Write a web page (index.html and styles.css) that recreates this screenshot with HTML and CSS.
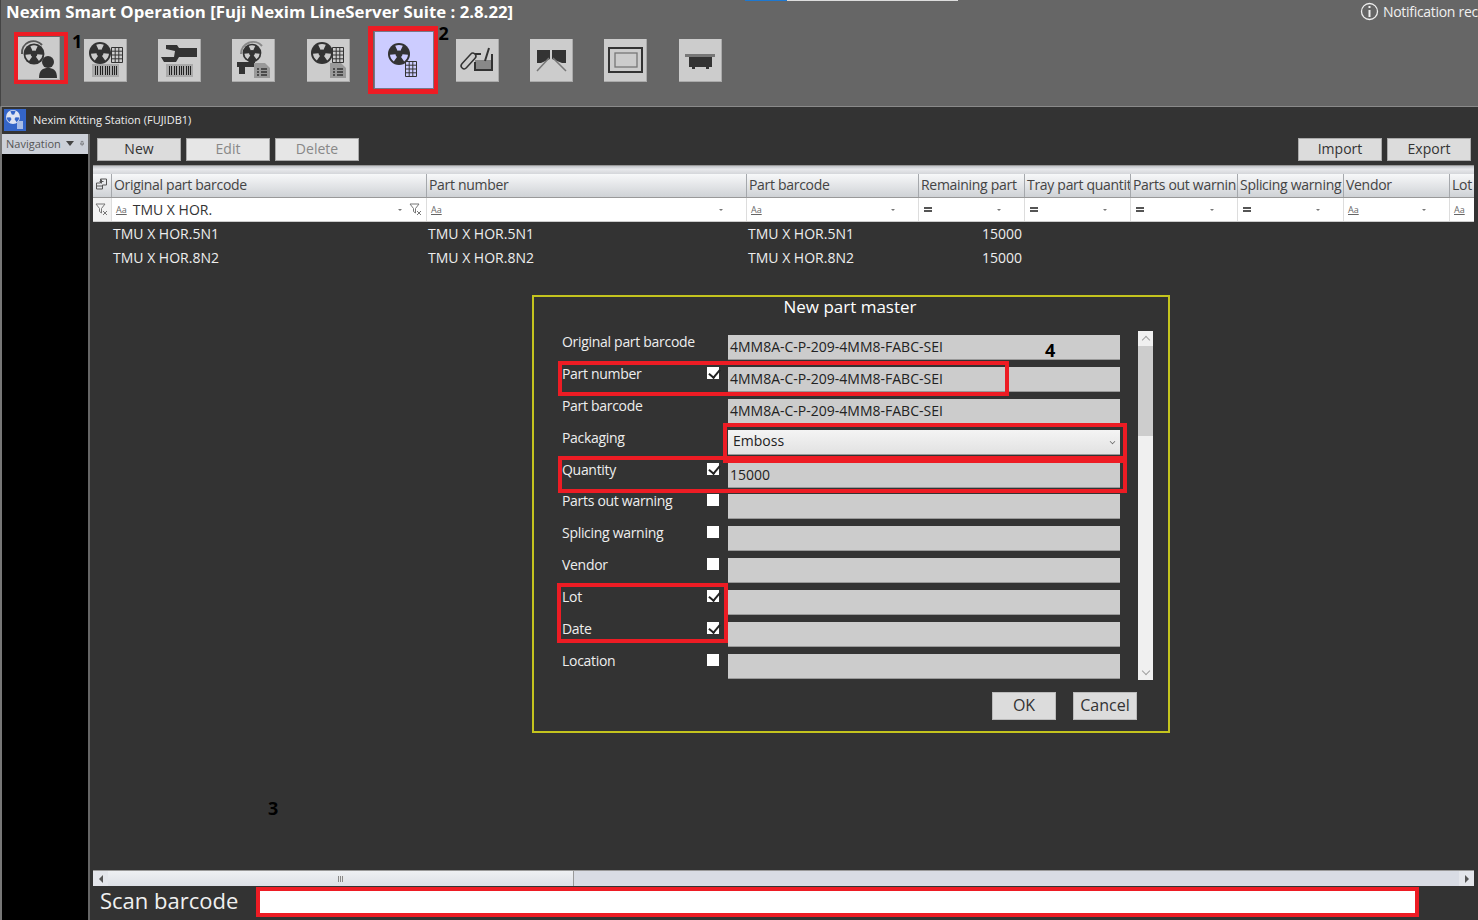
FILE: index.html
```html
<!DOCTYPE html>
<html lang="en">
<head>
    <meta charset="UTF-8">
    <title>Nexim Smart Operation</title>
    <link rel="stylesheet" href="styles.css">
</head>
<body>

<svg class="svg-defs" aria-hidden="true">
    <defs>
        <path id="blade" d="M-3.8-8.2A9 9 0 0 1 3.8-8.2L1.5-3.2A3.5 3.5 0 0 0-1.5-3.2Z"/>
        <g id="blades" fill="currentColor">
            <use href="#blade"/>
            <use href="#blade" transform="rotate(120)"/>
            <use href="#blade" transform="rotate(240)"/>
        </g>
        <g id="reel">
            <circle r="11" fill="#333"/>
            <use href="#blades"/>
        </g>
        <g id="minigrid" fill="none" stroke="#333" stroke-width="1">
            <path d="M.5.5H11.500V15.500H.5ZM4.200.5V15.500M7.800.5V15.500M.5 4.200H11.500M.5 8H11.500M.5 11.800H11.500"/>
        </g>
        <g id="barcode">
            <rect width="27" height="13" fill="#aaa"/>
            <path d="M3.500 2V11M5.500 2V11M8.500 2V11M10.500 2V11M13.500 2V11M15.500 2V11M17.500 2V11M20.500 2V11M22.500 2V11M24.500 2V11" stroke="#222" stroke-width="1"/>
        </g>
        <g id="doc">
            <path d="M0 0H11L16 5V15H0Z" fill="#999"/>
            <path d="M3 6H5M7 6H13M3 9H5M7 9H13M3 12H5M7 12H13" stroke="#333" stroke-width="1.300"/>
        </g>
        <path id="funnel" d="M1 1H10L6.500 5.500V10L4.500 8.500V5.500ZM8 8L12 12M12 8L8 12" fill="none" stroke="#777" stroke-width="1"/>
    </defs>
</svg>

<header class="titlebar">
    <div class="progress"><span class="progress-blue"></span><span class="progress-gray"></span></div>
    <div class="title-row">
        <h1>Nexim Smart Operation [Fuji Nexim LineServer Suite : 2.8.22]</h1>
        <div class="notify">
            <svg width="19" height="19" viewBox="0 0 19 19"><circle cx="9.500" cy="9.500" r="8" fill="none" stroke="#eee" stroke-width="1.300"/><path d="M9.500 8V15M9.500 4V6" stroke="#eee" stroke-width="2"/></svg>
            <span>Notification rec</span>
        </div>
    </div>
    <nav class="tools">
        <div class="tool tool-first">
            <div class="mark mark-first">
                <div class="tile tile-plain">
                    <svg width="42" height="42" viewBox="0 0 42 42">
                        <path d="M4 17A11.500 11.500 0 0 1 24 8" fill="none" stroke="#555" stroke-width="2"/>
                        <use href="#reel" transform="translate(16 17) scale(.95)"/>
                        <circle cx="30" cy="25" r="6" fill="#333"/>
                        <path d="M21 41C21 33 25 31 30 31S39 33 39 41Z" fill="#333"/>
                    </svg>
                </div>
            </div>
        </div>
        <div class="tool">
            <div class="tile"><svg width="42" height="42" viewBox="0 0 42 42">
                <use href="#reel" transform="translate(16 14)"/>
                <use href="#minigrid" transform="translate(27 8)"/>
                <use href="#barcode" transform="translate(8 25)"/>
            </svg></div>
        </div>
        <div class="tool">
            <div class="tile"><svg width="42" height="42" viewBox="0 0 42 42">
                <path d="M8 6H19L21 9H39V18H21L18 23H6L3 18H16L17 12L8 10Z" fill="#333"/>
                <use href="#barcode" transform="translate(8 25)"/>
            </svg></div>
        </div>
        <div class="tool">
            <div class="tile"><svg width="42" height="42" viewBox="0 0 42 42">
                <path d="M9 15A12 12 0 0 1 30 7" fill="none" stroke="#888" stroke-width="2"/>
                <use href="#reel" transform="translate(20 14) scale(.85)"/>
                <path d="M5 23H23V28H13V35H7V28H5Z" fill="#333"/>
                <use href="#doc" transform="translate(22 24)"/>
            </svg></div>
        </div>
        <div class="tool">
            <div class="tile"><svg width="42" height="42" viewBox="0 0 42 42">
                <use href="#reel" transform="translate(15 14)"/>
                <use href="#minigrid" transform="translate(25 8)"/>
                <use href="#doc" transform="translate(23 24)"/>
            </svg></div>
        </div>
        <div class="tool">
            <div class="mark mark-active">
                <div class="tile tile-active"><svg width="56" height="55" viewBox="0 0 56 55">
                    <use href="#reel" transform="translate(24 22)"/>
                    <use href="#minigrid" transform="translate(30 29)"/>
                </svg></div>
            </div>
            <span class="mark-num mark-num-two">2</span>
        </div>
        <div class="tool">
            <div class="tile"><svg width="42" height="42" viewBox="0 0 42 42">
                <rect x="3" y="19" width="19" height="6" rx="3" transform="rotate(-48 12.500 22)" fill="none" stroke="#333" stroke-width="1.500"/>
                <path d="M19 21H36V31H19Z" fill="#888"/>
                <path d="M19 15H25M19 23V31H36V15" fill="none" stroke="#333" stroke-width="2"/>
                <path d="M33 9L29 22" stroke="#333" stroke-width="2"/>
            </svg></div>
        </div>
        <div class="tool">
            <div class="tile"><svg width="42" height="42" viewBox="0 0 42 42">
                <path d="M7 11H20V20L11 24H7ZM22 11H36V24H32L22 20Z" fill="#333"/>
                <path d="M19 19L7 32M23 19L36 32" stroke="#777" stroke-width="1.500"/>
            </svg></div>
        </div>
        <div class="tool">
            <div class="tile"><svg width="42" height="42" viewBox="0 0 42 42">
                <rect x="5" y="9" width="33" height="24" fill="none" stroke="#333" stroke-width="2"/>
                <rect x="11" y="14" width="22" height="14" fill="none" stroke="#777" stroke-width="1.300"/>
            </svg></div>
        </div>
        <div class="tool">
            <div class="tile"><svg width="42" height="42" viewBox="0 0 42 42">
                <rect x="6" y="15" width="30" height="3" fill="#777"/>
                <path d="M10 18H33V28H30V30H27V28H16V30H13V28H10Z" fill="#333"/>
            </svg></div>
        </div>
    </nav>
</header>

<div class="window">
    <div class="window-title">
        <span class="app-icon"><svg width="22" height="22" viewBox="0 0 22 22">
            <circle cx="9" cy="8" r="7" fill="#dfe4f2"/>
            <use href="#blades" transform="translate(9 8) scale(.7)"/>
            <path d="M13 12H19V20H13Z" fill="#a9bde6"/>
        </svg></span>
        <span>Nexim Kitting Station (FUJIDB1)</span>
    </div>

    <div class="window-body">
        <aside class="nav-panel">
            <div class="nav-head">
                <span>Navigation</span>
                <span class="nav-caret"></span>
                <svg width="9" height="11" viewBox="0 0 9 11"><path d="M2.500 1H6.500V6H8V7H1V6H2.500ZM4.500 7V11" fill="none" stroke="#444"/></svg>
            </div>
        </aside>

        <main class="main-panel">
            <div class="actions">
                <button class="btn">New</button>
                <button class="btn btn-off">Edit</button>
                <button class="btn btn-off">Delete</button>
                <span class="spacer"></span>
                <button class="btn">Import</button>
                <button class="btn">Export</button>
            </div>

            <div class="grid-area">
                <div class="group-strip"></div>
                <div class="row row-head">
                    <div class="cell cell-corner"><svg width="13" height="13" viewBox="0 0 13 13"><path d="M5.500 1H11.500V7H7.500V11H1.500V5H5.500ZM1.500 8H7.500M8.500 3.500H4.500M6.500 1.500V5.500" fill="none" stroke="#555"/></svg></div>
                    <div class="cell">Original part barcode</div>
                    <div class="cell">Part number</div>
                    <div class="cell">Part barcode</div>
                    <div class="cell">Remaining part</div>
                    <div class="cell">Tray part quantit</div>
                    <div class="cell">Parts out warnin</div>
                    <div class="cell">Splicing warning</div>
                    <div class="cell">Vendor</div>
                    <div class="cell">Lot</div>
                </div>
                <div class="row row-filter">
                    <div class="cell cell-corner"><svg class="funnel" width="13" height="13"><use href="#funnel"/></svg></div>
                    <div class="cell">
                        <span class="op op-text">Aa</span>
                        <span class="filter-value">TMU X HOR.</span>
                        <span class="drop"></span>
                        <svg class="funnel" width="13" height="13"><use href="#funnel"/></svg>
                    </div>
                    <div class="cell"><span class="op op-text">Aa</span><span class="drop drop-last"></span></div>
                    <div class="cell"><span class="op op-text">Aa</span><span class="drop drop-last"></span></div>
                    <div class="cell"><span class="op op-eq"></span><span class="drop drop-last"></span></div>
                    <div class="cell"><span class="op op-eq"></span><span class="drop drop-last"></span></div>
                    <div class="cell"><span class="op op-eq"></span><span class="drop drop-last"></span></div>
                    <div class="cell"><span class="op op-eq"></span><span class="drop drop-last"></span></div>
                    <div class="cell"><span class="op op-text">Aa</span><span class="drop drop-last"></span></div>
                    <div class="cell"><span class="op op-text">Aa</span></div>
                </div>
                <div class="row row-data">
                    <div class="cell"></div>
                    <div class="cell">TMU X HOR.5N1</div>
                    <div class="cell">TMU X HOR.5N1</div>
                    <div class="cell">TMU X HOR.5N1</div>
                    <div class="cell cell-num">15000</div>
                </div>
                <div class="row row-data">
                    <div class="cell"></div>
                    <div class="cell">TMU X HOR.8N2</div>
                    <div class="cell">TMU X HOR.8N2</div>
                    <div class="cell">TMU X HOR.8N2</div>
                    <div class="cell cell-num">15000</div>
                </div>
            </div>

            <div class="hscroll">
                <span class="hscroll-btn"><i class="arrow-left"></i></span>
                <span class="hscroll-thumb"><i class="grip"></i></span>
                <span class="spacer"></span>
                <span class="hscroll-btn"><i class="arrow-right"></i></span>
            </div>

            <div class="scan-bar">
                <label class="scan-label">Scan barcode</label>
                <div class="scan-input"></div>
            </div>
        </main>
    </div>
</div>

<section class="dialog">
    <h2>New part master</h2>
    <div class="dialog-body">
        <div class="fields">
            <div class="field"><span class="field-name">Original part barcode</span><div class="input">4MM8A-C-P-209-4MM8-FABC-SEI</div></div>
            <div class="field"><span class="field-name">Part number</span><span class="check check-on"></span><div class="input">4MM8A-C-P-209-4MM8-FABC-SEI</div></div>
            <div class="field"><span class="field-name">Part barcode</span><div class="input">4MM8A-C-P-209-4MM8-FABC-SEI</div></div>
            <div class="field"><span class="field-name">Packaging</span><div class="input input-select">Emboss<i class="select-caret"></i></div></div>
            <div class="field"><span class="field-name">Quantity</span><span class="check check-on"></span><div class="input">15000</div></div>
            <div class="field"><span class="field-name">Parts out warning</span><span class="check"></span><div class="input"></div></div>
            <div class="field"><span class="field-name">Splicing warning</span><span class="check"></span><div class="input"></div></div>
            <div class="field"><span class="field-name">Vendor</span><span class="check"></span><div class="input"></div></div>
            <div class="field"><span class="field-name">Lot</span><span class="check check-on"></span><div class="input"></div></div>
            <div class="field"><span class="field-name">Date</span><span class="check check-on"></span><div class="input"></div></div>
            <div class="field"><span class="field-name">Location</span><span class="check"></span><div class="input"></div></div>
        </div>
        <div class="vscroll">
            <span class="vscroll-btn"><i class="chev chev-up"></i></span>
            <span class="vscroll-thumb"></span>
            <span class="spacer"></span>
            <span class="vscroll-btn"><i class="chev chev-down"></i></span>
        </div>
    </div>
    <div class="dialog-actions">
        <button class="btn btn-dialog">OK</button>
        <button class="btn btn-dialog">Cancel</button>
    </div>

    <!-- red marks drawn over the form -->
    <div class="red-box red-part"></div>
    <div class="red-box red-packaging"></div>
    <div class="red-box red-quantity"></div>
    <div class="red-box red-lot"></div>
</section>

<span class="mark-num mark-num-one">1</span>
<span class="mark-num mark-num-three">3</span>
<span class="mark-num mark-num-four">4</span>

</body>
</html>
```

FILE: styles.css
```css
* {
    box-sizing: border-box;
}

html, body {
    margin: 0;
    padding: 0;
}

body {
    position: relative;
    width: 1478px;
    height: 920px;
    overflow: hidden;
    display: flex;
    flex-direction: column;
    background-color: #333;
    font-family: "Open Sans", "Noto Sans", sans-serif;
    color: #fff;
}

.svg-defs {
    display: block;
    width: 0;
    height: 0;
    flex: none;
}

.spacer {
    flex: 1;
}

/* top bar */
.titlebar {
    flex: none;
    height: 107px;
    background-color: #666;
    border-bottom: 1px solid #8a8a8a;
    border-left: 1px solid #444;
}

.progress {
    display: flex;
    height: 1px;
    padding-left: 744px;
}

.progress-blue {
    width: 42px;
    background-color: #1e78d0;
}

.progress-gray {
    width: 171px;
    background-color: #ddd;
}

.title-row {
    display: flex;
    justify-content: space-between;
    align-items: center;
    height: 21px;
    padding-left: 5px;
}

.title-row h1 {
    margin: 0;
    font-size: 16.800px;
    font-weight: 700;
    line-height: 20px;
    white-space: nowrap;
}

.notify {
    display: flex;
    align-items: center;
    gap: 4px;
    width: 118px;
    font-size: 14px;
    letter-spacing: -.3px;
    white-space: nowrap;
    overflow: hidden;
    color: #f0f0f0;
}

.notify svg {
    flex: none;
}

.tools {
    display: flex;
    align-items: center;
    height: 76px;
    padding-left: 9px;
}

.tool {
    position: relative;
    flex: none;
    width: 74.400px;
    display: flex;
    justify-content: center;
}

.tool-first {
    width: 58px;
    justify-content: flex-end;
}

.tile {
    width: 43px;
    height: 43px;
    background-color: #ccc;
    border-right: 1px solid #aaa;
    border-bottom: 1px solid #aaa;
    color: #ccc;
}

.tile svg {
    display: block;
}

.mark {
    border: 4px solid #ed1c24;
    flex: none;
}

.mark-first {
    width: 54px;
    height: 52px;
    margin-top: -5px;
    padding: 1px 0 0;
}

.mark-first .tile {
    width: 42px;
    height: 43px;
}

.mark-active {
    width: 70px;
    height: 68px;
    border-width: 5px;
    padding: 0 1px;
}

.tile-active {
    width: 60px;
    height: 58px;
    background-color: #ccf;
    border: 1px solid #778;
    color: #ccf;
}

.mark-num {
    position: absolute;
    color: #000;
    font-size: 18px;
    font-weight: 700;
    line-height: 18px;
}

.mark-num-one {
    left: 72px;
    top: 32px;
}

.mark-num-two {
    left: 73px;
    top: -2px;
}

.mark-num-three {
    left: 268px;
    top: 799px;
}

.mark-num-four {
    left: 1045px;
    top: 341px;
}

/* window */
.window {
    flex: 1;
    min-height: 0;
    display: flex;
    flex-direction: column;
    border-left: 2px solid #777;
}

.window-title {
    flex: none;
    height: 27px;
    display: flex;
    align-items: center;
    gap: 7px;
    padding: 0 0 1px 2px;
    font-size: 11px;
    line-height: 13px;
    color: #eee;
}

.window-title span:last-child {
    margin-top: -2px;
}

.app-icon {
    width: 22px;
    height: 22px;
    background-color: #3465c8;
    color: #3465c8;
}

.app-icon svg {
    display: block;
}

.window-body {
    flex: 1;
    min-height: 0;
    display: flex;
}

.nav-panel {
    flex: none;
    width: 88px;
    background-color: #000;
    border-right: 2px solid #666;
}

.nav-head {
    height: 20px;
    display: flex;
    align-items: center;
    padding: 0 4px 2px;
    background-color: #ccd0d8;
    font-size: 11px;
    color: #555;
}

.nav-caret {
    margin: 1px 6px 0 5px;
    border-left: 4px solid transparent;
    border-right: 4px solid transparent;
    border-top: 5px solid #444;
}

.main-panel {
    flex: 1;
    min-width: 0;
    display: flex;
    flex-direction: column;
    padding: 0 4px 0 3px;
}

.actions {
    flex: none;
    height: 31px;
    display: flex;
    align-items: flex-start;
    gap: 5px;
    padding: 4px 3px 0 4px;
}

.btn {
    width: 84px;
    height: 23px;
    padding: 0 0 2px;
    border: 1px solid #aaa;
    background-color: #dcdcdc;
    color: #333;
    font-family: inherit;
    font-size: 14px;
    line-height: 18px;
}

.btn-off {
    background-color: #e6e6e6;
    color: #888;
}

/* grid */
.grid-area {
    flex: 1;
    min-height: 0;
}

.group-strip {
    height: 9px;
    background: linear-gradient(#c0c3c8, #e8e9ec 40%, #d4d6da);
    border-top: 1px solid #999;
}

.row {
    display: grid;
    grid-template-columns: 18px 315px 320px 172px 106px 106px 107px 106px 106px 25px;
}

.cell {
    min-width: 0;
    overflow: hidden;
    white-space: nowrap;
}

.row-head {
    height: 24px;
    background: linear-gradient(#f7f8f9, #cfd2d6);
    border-bottom: 1px solid #999;
    color: #444;
    font-size: 14px;
    letter-spacing: -.3px;
    line-height: 22px;
}

.row-head .cell {
    padding-left: 2px;
    border-left: 1px solid #a5a8ac;
}

.row-head .cell-corner {
    padding: 4px 0 0 2px;
    border-left: 0;
    line-height: 0;
}

.row-filter {
    height: 24px;
    background-color: #fff;
    border-bottom: 1px solid #ccc;
    color: #333;
    font-size: 14px;
}

.row-filter .cell {
    display: flex;
    align-items: center;
    padding: 0 4px;
    border-left: 1px solid #ddd;
}

.row-filter .cell-corner {
    padding: 0 0 0 2px;
    border-left: 0;
    background-color: #f2f2f2;
}

.funnel {
    flex: none;
}

.op {
    flex: none;
}

.op-text {
    font-size: 9px;
    color: #666;
    text-decoration: underline;
}

.op-eq {
    width: 8px;
    height: 5px;
    margin-left: 1px;
    border-top: 2px solid #555;
    border-bottom: 2px solid #555;
}

.filter-value {
    flex: 1;
    margin-left: 6px;
}

.drop {
    flex: none;
    margin: 0 7px 0 4px;
    border-left: 2px solid transparent;
    border-right: 2px solid transparent;
    border-top: 2px solid #777;
}

.drop-last {
    margin-left: auto;
    margin-right: 19px;
}

.row-data {
    height: 24px;
    color: #eee;
    font-size: 14px;
    line-height: 24px;
}

.row-data .cell {
    padding-left: 2px;
}

.row-data .cell-num {
    padding: 0 2px 0 0;
    text-align: right;
}

/* bottom */
.hscroll {
    flex: none;
    height: 16px;
    display: flex;
    background-color: #d9dce4;
    border-top: 1px solid #999;
}

.hscroll-btn {
    flex: none;
    width: 15px;
    display: flex;
    align-items: center;
    justify-content: center;
    background-color: #e4e6eb;
}

.arrow-left, .arrow-right {
    border-top: 4px solid transparent;
    border-bottom: 4px solid transparent;
}

.arrow-left {
    border-right: 4px solid #555;
}

.arrow-right {
    border-left: 4px solid #555;
}

.hscroll-thumb {
    flex: none;
    width: 466px;
    display: flex;
    align-items: center;
    justify-content: center;
    background: linear-gradient(#eef0f3, #dde0e6);
    border-right: 1px solid #999;
}

.grip {
    width: 6px;
    height: 6px;
    background: repeating-linear-gradient(90deg, #888 0 1px, #e8e8e8 1px 2px);
}

.scan-bar {
    flex: none;
    height: 34px;
    display: flex;
    align-items: flex-start;
    padding: 1px 0 0 7px;
}

.scan-label {
    width: 156px;
    font-size: 22px;
    line-height: 26px;
    color: #f0f0f0;
    white-space: nowrap;
}

.scan-input {
    width: 1163px;
    height: 30px;
    background-color: #fff;
    border: 4px solid #ed1c24;
}

/* dialog */
.dialog {
    position: absolute;
    left: 532px;
    top: 295px;
    width: 638px;
    height: 438px;
    padding: 0 32px 0 28px;
    background-color: #333;
    border: 2px solid #c4c41e;
}

.dialog h2 {
    margin: 0 -28px;
    padding-left: 2px;
    height: 36px;
    font-size: 17px;
    font-weight: 400;
    line-height: 20px;
    text-align: center;
    color: #fff;
}

.dialog-body {
    display: flex;
    justify-content: space-between;
    margin-right: -17px;
    height: 349px;
    margin-top: -2px;
}

.fields {
    width: 558px;
    padding-top: 4px;
}

.field {
    display: flex;
    height: 31.900px;
    font-size: 14px;
}

.field-name {
    flex: 1;
    line-height: 16px;
    margin-top: -1px;
    letter-spacing: -.3px;
    color: #eee;
}

.check {
    flex: none;
    width: 12px;
    height: 12px;
    margin: 0 9px 0 0;
    background-color: #fff;
}

.check-on::after {
    content: "";
    display: block;
    width: 5px;
    height: 9px;
    margin: 0 0 0 3.500px;
    border-right: 2px solid #222;
    border-bottom: 2px solid #222;
    transform: rotate(40deg);
}

.input {
    flex: none;
    width: 392px;
    height: 25px;
    padding-left: 2px;
    background-color: #ccc;
    border-bottom: 1px solid #999;
    color: #222;
    font-size: 14px;
    line-height: 23px;
}

.input-select {
    position: relative;
    margin-top: -1px;
    padding-left: 5px;
    background: linear-gradient(#f4f4f4, #e2e2e2);
    line-height: 21px;
}

.select-caret {
    position: absolute;
    right: 5px;
    top: 9px;
    width: 5px;
    height: 5px;
    border-right: 1px solid #666;
    border-bottom: 1px solid #666;
    transform: rotate(45deg) scale(.8);
}

.vscroll {
    flex: none;
    width: 15px;
    height: 349px;
    display: flex;
    flex-direction: column;
    background-color: #f0f0f0;
}

.vscroll-btn {
    flex: none;
    height: 15px;
    display: flex;
    align-items: center;
    justify-content: center;
}

.vscroll-thumb {
    flex: none;
    height: 90px;
    background-color: #cdcdcd;
}

.chev {
    width: 6px;
    height: 6px;
    border-left: 1px solid #a0a0a0;
    border-top: 1px solid #a0a0a0;
}

.chev-up {
    margin-top: 3px;
    transform: rotate(45deg);
}

.chev-down {
    margin-bottom: 3px;
    transform: rotate(225deg);
}

.dialog-actions {
    display: flex;
    justify-content: flex-end;
    gap: 17px;
    margin-top: 12px;
    margin-right: -1px;
}

.btn-dialog {
    width: 64px;
    height: 28px;
    font-size: 16px;
    border-color: #bbb;
}

.red-box {
    position: absolute;
    border: 4px solid #ed1c24;
    pointer-events: none;
}

.red-part {
    left: 24px;
    top: 64px;
    width: 451px;
    height: 35px;
}

.red-packaging {
    left: 189px;
    top: 126px;
    width: 404px;
    height: 40px;
}

.red-quantity {
    left: 24px;
    top: 159px;
    width: 569px;
    height: 37px;
}

.red-lot {
    left: 23px;
    top: 286px;
    width: 171px;
    height: 60px;
}
```
